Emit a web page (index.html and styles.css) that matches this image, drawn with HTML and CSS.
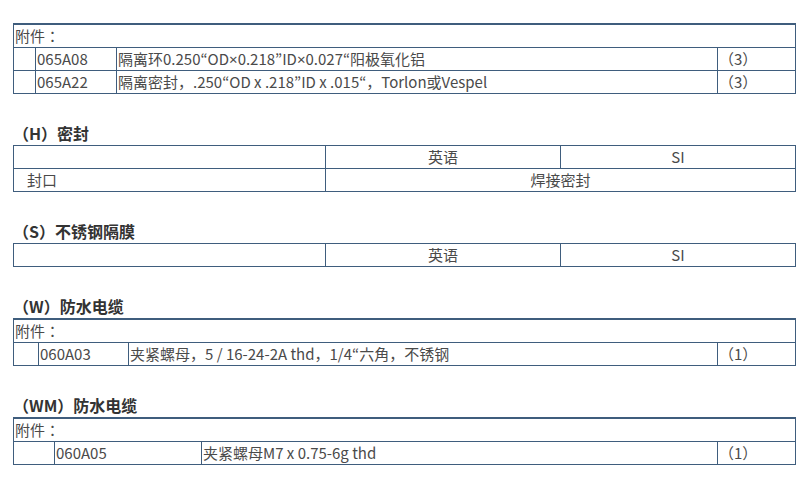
FILE: index.html
```html
<!DOCTYPE html>
<html lang="zh-CN">
<head>
<meta charset="utf-8">
<link rel="stylesheet" href="styles.css">
</head>
<body>
<table class="grid acc acc1">
  <colgroup><col class="c1"><col class="c2"><col class="c3"><col class="c4"></colgroup>
  <tr><td colspan="4">附件：</td></tr>
  <tr><td></td><td>065A08</td><td>隔离环0.250“OD<span class="q">×</span>0.218”ID<span class="q">×</span>0.027“阳极氧化铝</td><td>（3）</td></tr>
  <tr><td></td><td>065A22</td><td>隔离密封，.250“OD x .218”ID x .015“，Torlon或Vespel</td><td>（3）</td></tr>
</table>

<section class="sec">
  <h3 class="head">（H）密封</h3>
  <table class="grid spec">
    <colgroup><col class="s1"><col class="s2"><col class="s3"></colgroup>
    <tr><td></td><td class="ctr">英语</td><td class="ctr">SI</td></tr>
    <tr><td class="ind">封口</td><td colspan="2" class="ctr">焊接密封</td></tr>
  </table>
</section>

<section class="sec">
  <h3 class="head">（S）不锈钢隔膜</h3>
  <table class="grid spec">
    <colgroup><col class="s1"><col class="s2"><col class="s3"></colgroup>
    <tr><td></td><td class="ctr">英语</td><td class="ctr">SI</td></tr>
  </table>
</section>

<section class="sec">
  <h3 class="head">（W）防水电缆</h3>
  <table class="grid acc acc2">
    <colgroup><col class="c1"><col class="c2"><col class="c3"><col class="c4"></colgroup>
    <tr><td colspan="4">附件：</td></tr>
    <tr><td></td><td>060A03</td><td>夹紧螺母，5 / 16-24-2A thd，1/4“六角，不锈钢</td><td>（1）</td></tr>
  </table>
</section>

<section class="sec">
  <h3 class="head">（WM）防水电缆</h3>
  <table class="grid acc acc3">
    <colgroup><col class="c1"><col class="c2"><col class="c3"><col class="c4"></colgroup>
    <tr><td colspan="4">附件：</td></tr>
    <tr><td></td><td>060A05</td><td>夹紧螺母M7 x 0.75-6g thd</td><td>（1）</td></tr>
  </table>
</section>
</body>
</html>
```
FILE: styles.css
```css
html, body {
  margin: 0;
  background: #ffffff;
}
body {
  padding: 23px 0 0 13px;
  font-family: "Noto Sans CJK JP", "Noto Sans CJK SC", "Noto Sans", sans-serif;
  font-feature-settings: "locl" 0;
  font-size: 15px;
  color: #4a4a4a;
  text-spacing-trim: space-all;
}
.q {
  font-family: "Noto Sans", sans-serif;
}
.grid {
  border-collapse: collapse;
  table-layout: fixed;
  width: 782px;
}
.grid td {
  border: 1px solid #3f5d7d;
  height: 22px;
  padding: 0 1px;
  line-height: 20px;
  white-space: nowrap;
  overflow: hidden;
  vertical-align: middle;
}
.acc tr:first-child td {
  border-top: 2px solid #3f5d7d;
}
.acc1 .c1 { width: 22px; }
.acc1 .c2 { width: 81px; }
.acc1 .c3 { width: 601px; }
.acc .c4 { width: 78px; }
.acc2 .c1 { width: 25px; }
.acc2 .c2 { width: 90px; }
.acc2 .c3 { width: 589px; }
.acc3 .c1 { width: 41px; }
.acc3 .c2 { width: 147px; }
.acc3 .c3 { width: 516px; }
.spec .s1 { width: 312px; }
.spec .s2 { width: 235px; }
.spec .s3 { width: 235px; }
.ctr { text-align: center; }
.grid td.ind { padding-left: 13px; }
.sec {
  margin-top: 28px;
}
.head {
  margin: 0;
  font-size: 16px;
  font-weight: bold;
  color: #333333;
  line-height: 23px;
}
```
